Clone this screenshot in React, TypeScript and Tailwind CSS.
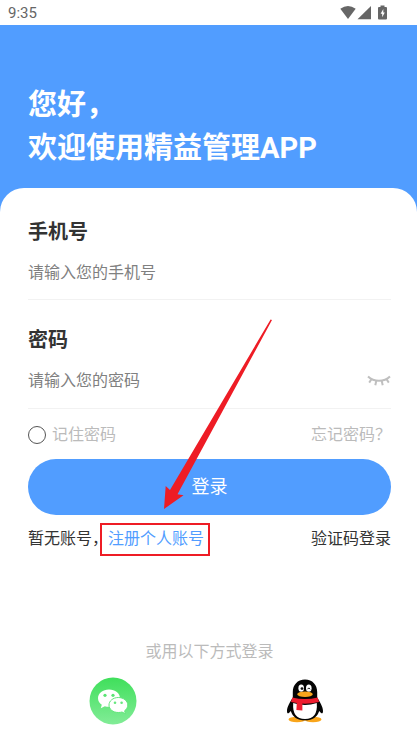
import { useState } from 'react';

function StatusIcons() {
  return (
    <svg width="50" height="16" viewBox="0 0 50 16" fill="#666666" aria-hidden="true">
      <path d="M0.3 3.8 Q8 -1.8 15.7 3.8 L8 14 Z" />
      <path d="M31 1 V14.3 H17.5 Z" />
      <path d="M40.5 0.5 H44.5 V2 H46 Q47 2 47 3 V13.5 Q47 14.5 46 14.5 H39 Q38 14.5 38 13.5 V3 Q38 2 39 2 H40.5 Z" />
      <path d="M43.3 4 L40.6 8.8 H42.2 V12.2 L44.8 7.4 H43.3 Z" fill="#fff" />
    </svg>
  );
}

function ClosedEye() {
  return (
    <svg width="24" height="12" viewBox="0 0 24 12" fill="none" stroke="#bfbfbf" strokeWidth="2" aria-hidden="true">
      <path d="M1 2.5 C7 8.2 17 8.2 23 2.5" />
      <path d="M4.6 5 L2.2 8.6 M9.3 6.8 L8.3 11.2 M14.7 6.8 L15.7 11.2 M19.4 5 L21.8 8.6" />
    </svg>
  );
}

function WechatLogo() {
  return (
    <svg width="48" height="48" viewBox="0 0 48 48" aria-hidden="true">
      <defs>
        <linearGradient id="wechat" x1="0" y1="0" x2="0" y2="1">
          <stop offset="0" stopColor="#3fdf5b" />
          <stop offset="1" stopColor="#82ec97" />
        </linearGradient>
      </defs>
      <circle cx="24" cy="24" r="23.5" fill="url(#wechat)" />
      <path
        d="M20 12.5 C13.8 12.5 9 16.2 9 21.2 C9 24 10.5 26.2 12.8 27.8 L11.8 31.2 L15.8 29.2 Q18 29.9 20.5 29.8 C26.5 29.5 31 26 31 21.2 C31 16.2 26.2 12.5 20 12.5 Z"
        fill="#fff"
      />
      <circle cx="16" cy="18.3" r="1.6" fill="#5ae474" />
      <circle cx="24" cy="18.3" r="1.6" fill="#5ae474" />
      <path
        d="M29.3 20.5 C24 20.5 20 24 20 28 C20 32.3 24 35.5 29.3 35.5 Q31.3 35.5 33 35 L36.5 36.8 L35.6 33.8 C37.6 32.4 38.8 30.3 38.8 28 C38.8 24 34.6 20.5 29.3 20.5 Z"
        fill="#fff"
        stroke="#62e67b"
        strokeWidth="1"
      />
      <circle cx="26" cy="25.8" r="1.3" fill="#66e77e" />
      <circle cx="32.6" cy="25.8" r="1.3" fill="#66e77e" />
    </svg>
  );
}

function QQLogo() {
  return (
    <svg width="40" height="44" viewBox="0 0 40 44" aria-hidden="true">
      <ellipse cx="12" cy="40.5" rx="8.5" ry="2.7" fill="#f9a51b" />
      <ellipse cx="28" cy="40.5" rx="8.5" ry="2.7" fill="#f9a51b" />
      <path
        d="M20 0.5 C12.5 0.5 7.8 6 7.8 13 V18.5 C5 23 2 28 2 32 C2 35 3.3 35.3 5.8 32 C7.5 38 12.5 41.3 20 41.3 C27.5 41.3 32.5 38 34.2 32 C36.7 35.3 38 35 38 32 C38 28 35 23 32.2 18.5 V13 C32.2 6 27.5 0.5 20 0.5 Z"
        fill="#050505"
      />
      <path d="M8.2 24 Q20 28 31.8 24 Q33 40 20 40 Q7 40 8.2 24 Z" fill="#fff" />
      <ellipse cx="16.2" cy="9.2" rx="2.8" ry="3.6" fill="#fff" />
      <ellipse cx="23.8" cy="9.2" rx="2.8" ry="3.6" fill="#fff" />
      <circle cx="17" cy="9.6" r="1.4" fill="#111" />
      <path d="M22.6 10.2 Q23.8 7.6 25 10.2" fill="none" stroke="#111" strokeWidth="1" />
      <ellipse cx="20" cy="15.3" rx="7.8" ry="2.8" fill="#f9a51b" />
      <path d="M7.3 18.5 Q20 21.5 32.7 18.5 L34 23 Q20 26.5 6 23 Z" fill="#ee1c2e" />
      <path d="M11.8 23.5 L17.4 24 V31.5 L11.4 31 Z" fill="#ee1c2e" />
    </svg>
  );
}

// Red pointer that leads the eye to the register link
function GuideArrow() {
  return (
    <svg
      className="absolute left-[163px] top-[319px] pointer-events-none"
      width="110"
      height="191"
      viewBox="0 0 110 191"
      fill="#ee1c25"
      aria-hidden="true"
    >
      <path d="M109 1 L107.6 0.4 L7 171 L2.7 167 L1 190 L20.5 176.3 L14.5 175.3 Z" />
    </svg>
  );
}

export default function App() {
  const [phone, setPhone] = useState('');
  const [password, setPassword] = useState('');
  const [remember, setRemember] = useState(false);

  return (
    <div className="relative bg-white text-base text-[#333333] font-[Roboto,'Noto_Sans_CJK_SC',sans-serif]">
      <div className="flex h-[25px] items-center justify-between pl-2 pr-[27px] text-[15px] text-[#666666]">
        <span className="pt-0.5">9:35</span>
        <StatusIcons />
      </div>

      <header className="bg-[#519dff] px-7 pt-[59px] pb-[42px]">
        <h1 className="text-[29px] leading-[43px] font-bold text-white">
          您好，
          <br />
          欢迎使用精益管理APP
        </h1>
      </header>

      <main className="relative -mt-6 rounded-t-3xl bg-white pl-7 pr-[26px] pt-[29px]">
        <form onSubmit={(e) => e.preventDefault()}>
          <div className="border-b border-[#f2f2f2] pb-3">
            <label htmlFor="phone" className="block text-xl leading-[30px] font-bold">
              手机号
            </label>
            <input
              id="phone"
              type="tel"
              value={phone}
              onChange={(e) => setPhone(e.target.value)}
              placeholder="请输入您的手机号"
              className="mt-2.5 block h-[30px] w-full outline-none placeholder:text-[#808080]"
            />
          </div>

          <div className="mt-[25px] border-b border-[#f2f2f2] pb-[13px]">
            <label htmlFor="password" className="block text-xl leading-[30px] font-bold">
              密码
            </label>
            <div className="mt-2.5 flex items-center">
              <input
                id="password"
                type="password"
                value={password}
                onChange={(e) => setPassword(e.target.value)}
                placeholder="请输入您的密码"
                className="block h-[30px] min-w-0 flex-1 outline-none placeholder:text-[#808080]"
              />
              <button type="button" aria-label="显示密码">
                <ClosedEye />
              </button>
            </div>
          </div>

          <div className="mt-3.5 flex items-center justify-between text-[#bbbbbb]">
            <label className="flex items-center gap-1.5">
              <input
                type="checkbox"
                checked={remember}
                onChange={(e) => setRemember(e.target.checked)}
                className="size-[18px] appearance-none rounded-full border border-[#555555] checked:bg-[#519dff]"
              />
              记住密码
            </label>
            <a href="#forgot">忘记密码？</a>
          </div>

          <button type="submit" className="mt-3 block h-14 w-full rounded-full bg-[#519dff] text-lg text-white">
            登录
          </button>
        </form>

        <div className="mt-3 flex items-center justify-between">
          <p>
            暂无账号，
            <a href="#register" className="relative text-[#519dff]">
              注册个人账号
              <span className="pointer-events-none absolute -left-2 -right-1.5 -top-1.5 -bottom-2 border-2 border-[#ee1c25]" />
            </a>
          </p>
          <a href="#code">验证码登录</a>
        </div>

        <p className="mt-[89px] text-center text-[#bbbbbb]">或用以下方式登录</p>
        <div className="mt-[13px] flex items-center justify-center gap-[148px] pr-1.5 pb-4">
          <button type="button" aria-label="微信登录">
            <WechatLogo />
          </button>
          <button type="button" aria-label="QQ登录">
            <QQLogo />
          </button>
        </div>
      </main>

      <GuideArrow />
    </div>
  );
}
